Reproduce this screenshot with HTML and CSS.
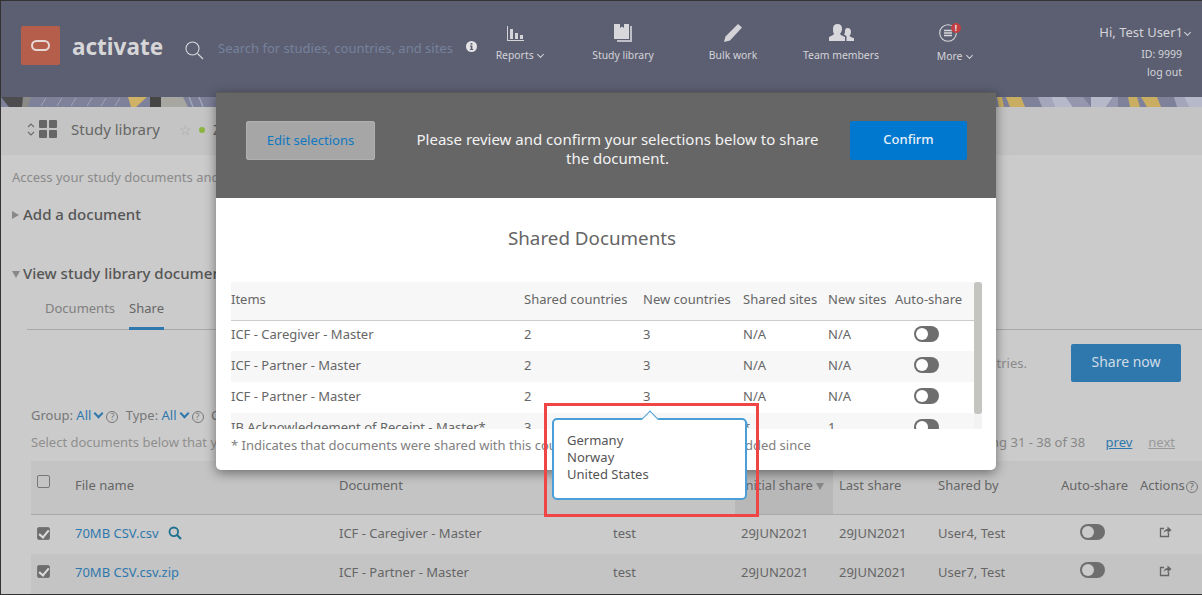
FILE: index.html
```html
<!DOCTYPE html>
<html lang="en">
<head>
    <meta charset="UTF-8">
    <meta name="viewport" content="width=device-width, initial-scale=1.0">
    <title>Study library</title>
    <link rel="stylesheet" href="styles.css">
</head>
<body>
<div class="page">
    <header class="topbar">
        <div class="logo"><span class="logo-ring"></span></div>
        <div class="brand">activate</div>
        <svg class="search-icon" width="20" height="20" viewBox="0 0 20 20" fill="none" stroke="#d8d8dc"><circle cx="7.500" cy="7.500" r="6.500" stroke-width="1.100"/><path d="M12.500 12.500l5.500 5.500" stroke-width="1.100"/></svg>
        <div class="search-text">Search for studies, countries, and sites</div>
        <svg class="info-icon" width="11" height="11" viewBox="0 0 11 11"><circle cx="5.500" cy="5.500" r="5.500" fill="#e4e4e6"/><rect x="4.600" y="2" width="1.800" height="1.600" fill="#5c5f72"/><path d="M3.900 4.500h2.500v3.400h.8v1H3.900v-1h.8V5.500h-.8z" fill="#5c5f72"/></svg>
        <nav class="nav">
            <div class="nav-item nav-reports">
                <svg width="17" height="18" viewBox="0 0 17 18" fill="#d4d4d8"><path d="M0 2h1v14h17v1H0z"/><rect x="3" y="5" width="3" height="10"/><rect x="8" y="9" width="3" height="6"/><rect x="13" y="11" width="3" height="4"/></svg>
                <span>Reports <i class="chev"></i></span>
            </div>
            <div class="nav-item nav-library">
                <svg width="18" height="18" viewBox="0 0 18 18" fill="#d8d8dc"><path d="M0 0h6v4l2-1.500L10 4V0h5v15H0z"/><path d="M16 2h2v16H3v-2h13z" opacity=".8"/></svg>
                <span>Study library</span>
            </div>
            <div class="nav-item nav-bulk">
                <svg width="18" height="18" viewBox="0 0 18 18" fill="#d4d4d8"><path d="M14 0l4 3.500L6 16.500 0 18l1.500-5.500z"/></svg>
                <span>Bulk work</span>
            </div>
            <div class="nav-item nav-team">
                <svg width="25" height="18" viewBox="0 0 25 18" fill="#d8d8dc"><path d="M8.500 0c3 0 4.500 2 4.500 4.800S11.800 8.700 11 9.800c.3 1.500 3 2.200 5 3.200v4H0v-4c2-1 4.700-1.700 5-3.200C4.200 8.700 4 7.500 4 4.800 4 2 5.500 0 8.500 0z"/><path d="M18.500 4c2.300 0 3.500 1.700 3.500 3.800s-.8 3-1.500 4c.3 1 2.500 1.700 4.500 2.500V17h-7.500v-5c-1-.6-1.800-1-2.500-1.400.7-.9 1-1.800 1-3.300 0-2.100.5-3.300 2.500-3.300z"/></svg>
                <span>Team members</span>
            </div>
            <div class="nav-item nav-more">
                <div class="more-icon">
                    <svg width="18" height="18" viewBox="0 0 18 18" fill="none" stroke="#d8d8dc"><circle cx="9" cy="9" r="8.300" stroke-width="1.100"/><path d="M5 6.500h8M5 9h8M5 11.500h8" stroke-width="1.400"/></svg>
                    <b class="alert">!</b>
                </div>
                <span>More <i class="chev"></i></span>
            </div>
        </nav>
        <div class="user">
            <div class="user-name">Hi, Test User1<i class="chev"></i></div>
            <div class="user-line">ID: 9999</div>
            <div class="user-line">log out</div>
        </div>
    </header>

    <svg class="strip" width="1202" height="10" viewBox="0 0 1202 10">
        <rect width="1202" height="10" fill="#7d819a"/>
        <polygon points="0,0 22,0 27,5 21,10 8,10" fill="#4d4d4f"/>
        <polygon points="22,0 30,0 27,10 21,10" fill="#8a8a88"/>
        <path d="M40 9l5-8M56 9l5-8M70 9l5-8M86 9l5-8M100 9l5-8M114 9l5-8" stroke="#a2a5b8" stroke-width="1" fill="none"/>
        <polygon points="127,0 146,0 135,10 130,10" fill="#cfb265"/>
        <rect x="149" y="0" width="11" height="10" fill="#454545"/>
        <polygon points="160,0 182,0 187,10 160,10" fill="#a8a6a0"/>
        <path d="M192 10l-4-10M202 10l-4-10" stroke="#a2a5b8" stroke-width="1.500" fill="none"/>
        <polygon points="996,0 1001,0 1003,10 998,10" fill="#c9ae62"/>
        <polygon points="1005,0 1020,0 1024,10 1009,10" fill="#c9ae62"/>
        <polygon points="1037,0 1050,0 1054,10 1041,10" fill="#a4a7bb"/>
        <polygon points="1050,0 1065,0 1072,10 1054,10" fill="#b6b9c9"/>
        <polygon points="1065,0 1082,0 1090,10 1072,10" fill="#9497ad"/>
        <polygon points="1090,0 1112,0 1105,10 1090,10" fill="#b6b9c9"/>
        <polygon points="1112,0 1117,0 1117,10 1105,10" fill="#9497ad"/>
        <polygon points="1127,0 1136,0 1139,10 1129,10" fill="#c9ae62"/>
        <polygon points="1140,0 1156,0 1160,10 1146,10" fill="#c9ae62"/>
        <polygon points="1173,0 1183,0 1188,10 1176,10" fill="#a4a7bb"/>
        <polygon points="1183,0 1202,0 1202,10 1188,10" fill="#b6b9c9"/>
    </svg>

    <div class="crumb">
        <svg class="crumb-arrows" width="8" height="17" viewBox="0 0 8 17" fill="none" stroke="#6b6b6b" stroke-width="1.100"><path d="M1 6l3-3 3 3M1 11l3 3 3-3"/></svg>
        <div class="crumb-grid"><span></span><span></span><span></span><span></span></div>
        <div class="crumb-title">Study library</div>
        <span class="crumb-star">☆</span>
        <span class="crumb-dot"></span>
        <span class="crumb-study">Z</span>
    </div>

    <main class="content">
        <p class="intro">Access your study documents and</p>
        <h3 class="section add"><i class="tri-right"></i>Add a document</h3>
        <h3 class="section view"><i class="tri-down"></i>View study library documents</h3>
        <div class="tabs">
            <span class="tab">Documents</span>
            <span class="tab active">Share</span>
        </div>
        <div class="share-row">
            <span class="share-note">tries.</span>
            <div class="share-btn">Share now</div>
        </div>
        <div class="filters">
            Group: <a class="filter-val">All<i class="chev blue"></i></a><i class="help">?</i>
            Type: <a class="filter-val">All<i class="chev blue"></i></a><i class="help">?</i>
            Country
        </div>
        <div class="select-row">
            <span>Select documents below that you want to share</span>
            <span class="paging">Showing 31 - 38 of 38 <a class="prev">prev</a><a class="next">next</a></span>
        </div>
        <table class="docs">
            <colgroup>
                <col class="c-check"><col class="c-file"><col class="c-doc"><col class="c-test"><col class="c-init"><col class="c-last"><col class="c-by"><col class="c-auto"><col class="c-act">
            </colgroup>
            <thead>
                <tr>
                    <th><i class="box"></i></th>
                    <th>File name</th>
                    <th>Document</th>
                    <th></th>
                    <th class="sorted">Initial share <i class="tri-sort"></i></th>
                    <th>Last share</th>
                    <th>Shared by</th>
                    <th>Auto-share</th>
                    <th>Actions<i class="help">?</i></th>
                </tr>
            </thead>
            <tbody>
                <tr>
                    <td><i class="box checked"></i></td>
                    <td><a class="file">70MB CSV.csv</a>
                        <svg class="lens" width="14" height="14" viewBox="0 0 14 14" fill="none" stroke="#1f6f8f" stroke-width="1.800"><circle cx="5.800" cy="5.800" r="4.300"/><path d="M9 9l4 4" stroke-width="2.200"/></svg></td>
                    <td>ICF - Caregiver - Master</td>
                    <td>test</td>
                    <td>29JUN2021</td>
                    <td>29JUN2021</td>
                    <td>User4, Test</td>
                    <td class="mid"><i class="toggle"></i></td>
                    <td class="mid"><svg width="13" height="13" viewBox="0 0 13 13" fill="none" stroke="#666"><path d="M9.500 8v3.500h-8v-8H5" stroke-width="1.300"/><path d="M4.500 8C5 5 7 4 8.500 4V1.500L12.500 5 8.500 8.500V6C7 6 5.500 6.500 4.500 8z" fill="#666" stroke="none"/></svg></td>
                </tr>
                <tr class="alt">
                    <td><i class="box checked"></i></td>
                    <td><a class="file">70MB CSV.csv.zip</a></td>
                    <td>ICF - Partner - Master</td>
                    <td>test</td>
                    <td>29JUN2021</td>
                    <td>29JUN2021</td>
                    <td>User7, Test</td>
                    <td class="mid"><i class="toggle"></i></td>
                    <td class="mid"><svg width="13" height="13" viewBox="0 0 13 13" fill="none" stroke="#666"><path d="M9.500 8v3.500h-8v-8H5" stroke-width="1.300"/><path d="M4.500 8C5 5 7 4 8.500 4V1.500L12.500 5 8.500 8.500V6C7 6 5.500 6.500 4.500 8z" fill="#666" stroke="none"/></svg></td>
                </tr>
            </tbody>
        </table>
    </main>

    <section class="modal">
        <div class="modal-head">
            <div class="btn-edit">Edit selections</div>
            <div class="modal-msg">Please review and confirm your selections below to share the document.</div>
            <div class="btn-confirm">Confirm</div>
        </div>
        <div class="modal-body">
            <h2 class="modal-title">Shared Documents</h2>
            <div class="scroll-area">
                <table class="shared">
                    <colgroup>
                        <col class="s-items"><col class="s-sc"><col class="s-nc"><col class="s-ss"><col class="s-ns"><col class="s-auto">
                    </colgroup>
                    <thead>
                        <tr><th>Items</th><th>Shared countries</th><th>New countries</th><th>Shared sites</th><th>New sites</th><th>Auto-share</th></tr>
                    </thead>
                    <tbody>
                        <tr><td>ICF - Caregiver - Master</td><td>2</td><td>3</td><td>N/A</td><td>N/A</td><td class="tog"><i class="toggle"></i></td></tr>
                        <tr class="alt"><td>ICF - Partner - Master</td><td>2</td><td>3</td><td>N/A</td><td>N/A</td><td class="tog"><i class="toggle"></i></td></tr>
                        <tr><td>ICF - Partner - Master</td><td>2</td><td>3</td><td>N/A</td><td>N/A</td><td class="tog"><i class="toggle"></i></td></tr>
                        <tr class="alt"><td>IB Acknowledgement of Receipt - Master*</td><td>3</td><td>3</td><td>*</td><td>1</td><td class="tog"><i class="toggle"></i></td></tr>
                    </tbody>
                </table>
                <div class="scrollbar"><div class="thumb"></div></div>
            </div>
            <p class="footnote">* Indicates that documents were shared with this country and that sites have been added since</p>
        </div>
    </section>

    <div class="tooltip">
        <div>Germany</div>
        <div>Norway</div>
        <div>United States</div>
    </div>
    <div class="callout"></div>
</div>
</body>
</html>
```

FILE: styles.css
```css
* {
    box-sizing: border-box;
}

body {
    margin: 0;
    font-family: "Noto Sans", "Open Sans", sans-serif;
    font-size: 13px;
    color: #666;
}

i {
    font-style: normal;
}

.page {
    position: relative;
    width: 1202px;
    height: 595px;
    overflow: hidden;
    background: #cbcbcb;
    border: 1px solid #333;
    border-right: 0;
}

/* top bar */
.topbar {
    display: flex;
    align-items: flex-start;
    height: 96px;
    padding-left: 20px;
    background: #5c5f72;
}

.logo {
    display: flex;
    align-items: center;
    justify-content: center;
    width: 39px;
    height: 39px;
    margin-top: 25px;
    background: #b55e4b;
    border-radius: 2px;
}

.logo-ring {
    width: 19px;
    height: 11px;
    border: 2px solid #e6d8d4;
    border-radius: 6px;
}

.brand {
    width: 113px;
    margin: 28px 0 0 12px;
    font-size: 22.500px;
    line-height: 36px;
    font-weight: 700;
    color: #d6d6d8;
}

.search-icon {
    margin-top: 40px;
}

.search-text {
    width: 248px;
    margin: 37px 0 0 13px;
    line-height: 20px;
    color: #76829b;
    white-space: nowrap;
}

.info-icon {
    margin-top: 40px;
}

.nav {
    display: flex;
}

.nav-item {
    display: flex;
    flex-direction: column;
    align-items: center;
    padding-top: 23px;
    font-size: 10.400px;
    color: #d4d4d8;
    white-space: nowrap;
}

.nav-item svg {
    display: block;
}

.nav-item span {
    margin-top: 5px;
    line-height: 16px;
}

.nav-reports { width: 86px; }
.nav-library { width: 120px; }
.nav-bulk { width: 100px; }
.nav-team { width: 116px; }
.nav-more { width: 112px; }

.nav-reports svg {
    margin-right: 10px;
}

.nav-more span {
    margin-top: 6px;
}

.more-icon {
    position: relative;
    height: 18px;
    margin-right: 14px;
}

.alert {
    position: absolute;
    top: -1px;
    left: 12px;
    width: 10px;
    height: 10px;
    border-radius: 50%;
    background: #c13f43;
    color: #eee;
    font-size: 8px;
    line-height: 10px;
    text-align: center;
}

.chev {
    display: inline-block;
    width: 5px;
    height: 5px;
    margin: 0 1px 2px 2px;
    border-right: 1px solid currentColor;
    border-bottom: 1px solid currentColor;
    transform: rotate(45deg);
}

.user {
    margin-left: auto;
    padding: 21px 20px 0 0;
    text-align: right;
    color: #d4d4d8;
    font-size: 10.500px;
}

.user-name {
    margin: 0 -9px 3px 0;
    font-size: 13px;
    line-height: 20px;
    white-space: nowrap;
}

.user-line {
    line-height: 18px;
}

.strip {
    display: block;
}

/* study bar */
.crumb {
    display: flex;
    align-items: center;
    height: 48px;
    padding: 0 0 4px 26px;
    background: #c4c4c4;
}

.crumb-arrows {
    margin-right: 4px;
}

.crumb-grid {
    display: grid;
    grid-template-columns: 8px 8px;
    gap: 2px;
    margin-right: 14px;
}

.crumb-grid span {
    height: 8px;
    background: #666;
    border-radius: 1px;
}

.crumb-title {
    width: 108px;
    font-size: 15px;
    color: #666;
}

.crumb-star {
    font-size: 14px;
    color: #aaa;
}

.crumb-dot {
    width: 6px;
    height: 6px;
    margin: 2px 8px 0 7px;
    border-radius: 50%;
    background: #8cb53f;
}

.crumb-study {
    font-size: 14px;
}

/* page content */
.content {
    height: 440px;
}

.intro {
    margin: 0;
    padding: 13px 0 0 11px;
    line-height: 18px;
    color: #8a8a8a;
}

.section {
    margin: 0;
    font-size: 15px;
    line-height: 20px;
    font-weight: 500;
    color: #555;
    white-space: nowrap;
}

.add {
    padding: 18px 0 0 11px;
}

.view {
    padding: 39px 0 0 11px;
}

.tri-right {
    display: inline-block;
    margin: 0 4px 1px 0;
    border-left: 7px solid #888;
    border-top: 4px solid transparent;
    border-bottom: 4px solid transparent;
}

.tri-down {
    display: inline-block;
    margin: 0 3px 1px 0;
    border-top: 7px solid #888;
    border-left: 4px solid transparent;
    border-right: 4px solid transparent;
}

.tabs {
    display: flex;
    gap: 14px;
    height: 43px;
    margin: 4px 0 0 26px;
    padding: 11px 0 0 18px;
    border-bottom: 1px solid #a8a8a8;
}

.tab {
    height: 32px;
    line-height: 20px;
    color: #808080;
}

.tab.active {
    color: #666;
    border-bottom: 3px solid #2f78ad;
}

.share-row {
    display: flex;
    justify-content: flex-end;
    align-items: center;
    gap: 44px;
    height: 38px;
    margin-top: 14px;
    padding-right: 21px;
}

.share-note {
    color: #8a8a8a;
}

.share-btn {
    width: 110px;
    height: 38px;
    background: #2f78ad;
    border-radius: 2px;
    color: #d0dce6;
    font-size: 14px;
    line-height: 36px;
    text-align: center;
}

.filters {
    margin-top: 23px;
    padding-left: 30px;
    line-height: 20px;
    color: #777;
    white-space: nowrap;
}

.filter-val {
    color: #2f78ad;
}

.chev.blue {
    border-width: 2px;
    width: 7px;
    height: 7px;
    margin: 0 3px 3px 4px;
}

.help {
    display: inline-block;
    width: 12px;
    height: 12px;
    margin: 0 4px 0 1px;
    border: 1px solid #777;
    border-radius: 50%;
    font-size: 9px;
    line-height: 10px;
    text-align: center;
}

.select-row {
    display: flex;
    justify-content: space-between;
    margin-top: 6px;
    padding: 0 27px 0 30px;
    line-height: 22px;
    color: #8f8f8f;
}

.paging {
    color: #888;
}

.prev,
.next {
    text-decoration: underline;
}

.prev {
    margin-left: 17px;
    color: #2f78ad;
}

.next {
    margin-left: 16px;
    color: #999;
}

.docs {
    width: 1171px;
    margin: 8px 0 0 30px;
    border-collapse: collapse;
    table-layout: fixed;
}

.c-check { width: 38px; }
.c-file { width: 264px; }
.c-doc { width: 274px; }
.c-test { width: 128px; }
.c-init { width: 98px; }
.c-last { width: 99px; }
.c-by { width: 123px; }
.c-auto { width: 79px; }
.c-act { width: 68px; }

.docs th,
.docs td {
    padding: 0 0 2px 6px;
    font-weight: 400;
    text-align: left;
    white-space: nowrap;
    color: #666;
}

.docs th {
    height: 53px;
    padding-bottom: 4px;
    background: #c4c4c4;
    border-bottom: 1px solid #aaa;
}

.docs th .box {
    margin-bottom: 8px;
}

.docs th.sorted {
    background: #b8b8b8;
}

.docs td {
    height: 40px;
}

.docs .alt td {
    background: #c4c4c4;
    height: 41px;
    padding-bottom: 6px;
}

.docs td.mid {
    padding-left: 25px;
}

.docs td:last-child.mid {
    padding-left: 25px;
}

.box {
    display: block;
    width: 13px;
    height: 13px;
    border: 1px solid #777;
    border-radius: 2px;
}

.box.checked {
    position: relative;
    background: #6e6e6e;
}

.box.checked::after {
    content: "";
    position: absolute;
    left: 3px;
    top: 0;
    width: 4px;
    height: 8px;
    border-right: 2px solid #ddd;
    border-bottom: 2px solid #ddd;
    transform: rotate(40deg);
}

.file {
    color: #2f78ad;
}

.lens {
    margin-left: 6px;
    vertical-align: -2px;
}

.tri-sort {
    display: inline-block;
    border-top: 7px solid #888;
    border-left: 4px solid transparent;
    border-right: 4px solid transparent;
}

.toggle {
    display: block;
    position: relative;
    width: 25px;
    height: 16px;
    border-radius: 8px;
    background: #6e6e6e;
}

.toggle::after {
    content: "";
    position: absolute;
    left: 2px;
    top: 2px;
    width: 12px;
    height: 12px;
    border-radius: 50%;
    background: #fff;
}

.docs .toggle {
    margin-bottom: 3px;
}

.docs .toggle::after {
    background: #cbcbcb;
}

/* share modal */
.modal {
    position: absolute;
    left: 215px;
    top: 91px;
    width: 780px;
    height: 378px;
    border-radius: 0 0 5px 5px;
    background: #fff;
    box-shadow: 0 3px 12px rgba(0, 0, 0, .45);
}

.modal-head {
    display: flex;
    align-items: center;
    height: 106px;
    padding: 0 29px 10px 30px;
    background: #666;
    border-top: 1px solid #5a5a5a;
}

.btn-edit {
    width: 129px;
    height: 39px;
    flex: none;
    background: #a6a6a6;
    border: 1px solid #b0b0b0;
    border-radius: 2px;
    color: #0e78c2;
    line-height: 37px;
    text-align: center;
}

.modal-msg {
    flex: 1;
    margin-top: 17px;
    padding: 0 22px 0 32px;
    color: #f2f2f2;
    font-size: 15px;
    line-height: 19px;
    text-align: center;
}

.btn-confirm {
    width: 117px;
    height: 39px;
    flex: none;
    background: #0078cf;
    border-radius: 2px;
    color: #e8f1f8;
    font-size: 13px;
    font-weight: 500;
    line-height: 37px;
    text-align: center;
}

.modal-body {
    padding: 0 15px;
}

.modal-title {
    margin: 0;
    padding: 26px 28px 0 0;
    height: 84px;
    font-size: 18.800px;
    line-height: 28px;
    font-weight: 400;
    color: #666;
    text-align: center;
}

.scroll-area {
    position: relative;
    width: 751px;
    height: 147px;
    overflow: hidden;
}

.shared {
    width: 743px;
    border-collapse: collapse;
    table-layout: fixed;
}

.s-items { width: 293px; }
.s-sc { width: 119px; }
.s-nc { width: 100px; }
.s-ss { width: 85px; }
.s-ns { width: 67px; }
.s-auto { width: 79px; }

.shared th,
.shared td {
    padding: 0 0 3px;
    font-weight: 400;
    text-align: left;
    white-space: nowrap;
    color: #666;
}

.shared th {
    height: 38px;
    padding-bottom: 4px;
    background: #f7f7f7;
    border-bottom: 1px solid #ccc;
}

.shared td {
    height: 31px;
}

.shared .alt td {
    background: #f7f7f7;
}

.shared .tog .toggle {
    margin-left: 19px;
}

.scrollbar {
    position: absolute;
    top: 0;
    right: 0;
    width: 8px;
    height: 147px;
    background: #f3f3f3;
}

.thumb {
    height: 132px;
    background: #c4c4c0;
    border-radius: 3px;
}

.footnote {
    margin: 7px 0 0;
    line-height: 18px;
    color: #808080;
    white-space: nowrap;
}

/* country tooltip */
.tooltip {
    position: absolute;
    left: 551px;
    top: 417px;
    width: 195px;
    height: 82px;
    padding: 12px 13px;
    background: #fff;
    border: 2px solid #4a9fd8;
    border-radius: 5px;
    font-size: 13px;
    line-height: 17px;
    color: #555;
}

.tooltip::before {
    content: "";
    position: absolute;
    left: 90px;
    top: -7px;
    width: 11px;
    height: 11px;
    background: #fff;
    border-left: 1.500px solid #4a9fd8;
    border-top: 1.500px solid #4a9fd8;
    transform: rotate(45deg);
}

.callout {
    position: absolute;
    left: 543px;
    top: 402px;
    width: 215px;
    height: 114px;
    border: 3px solid #f04545;
}
```
